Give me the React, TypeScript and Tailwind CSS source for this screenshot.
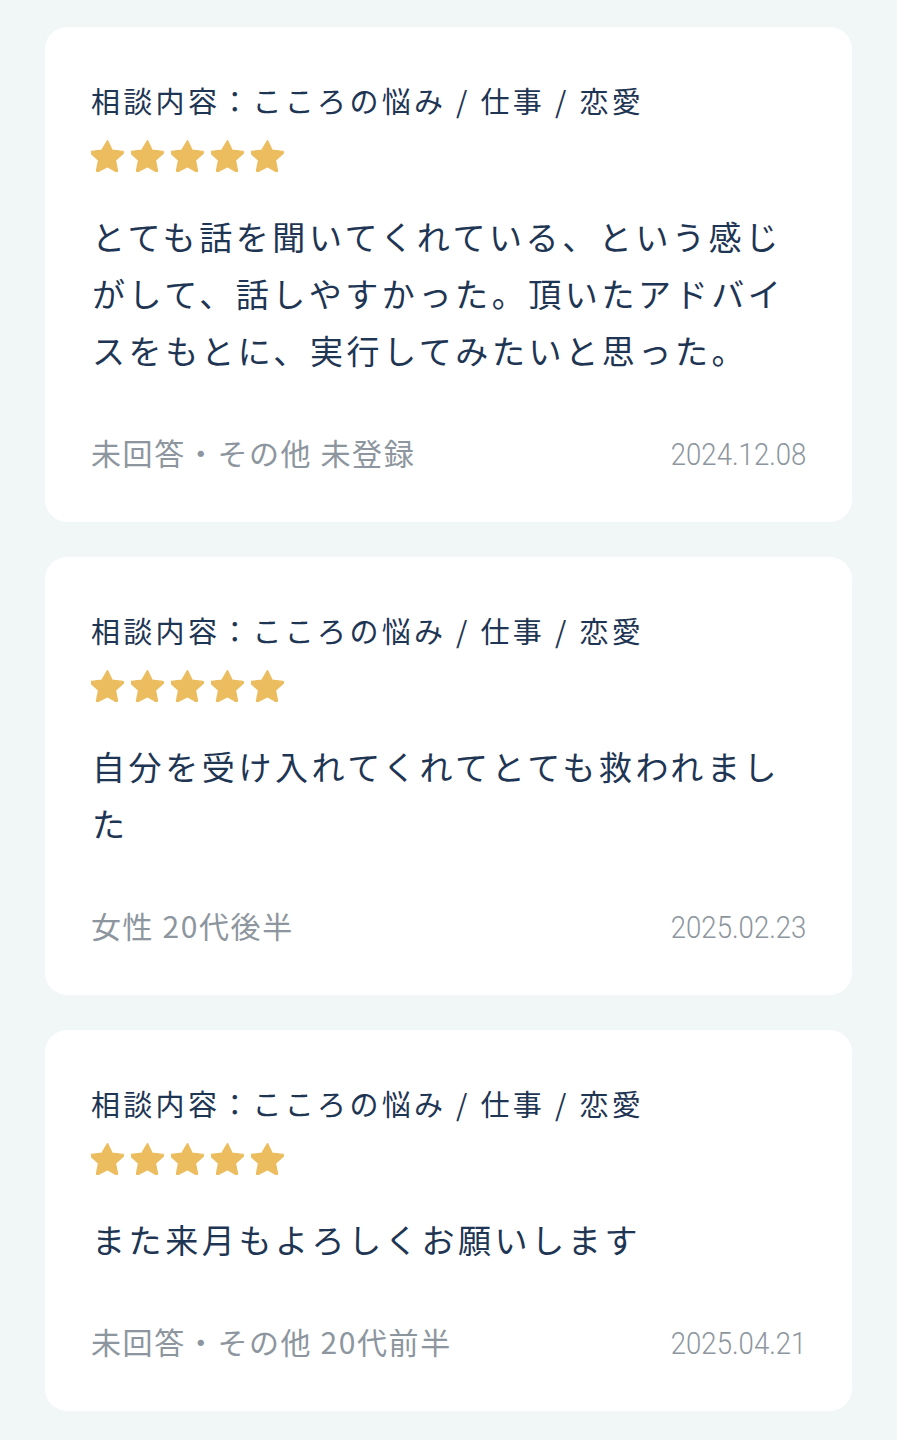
import React from 'react';

type Review = {
    body: string;
    profile: string;
    date: string;
};

const reviews: Review[] = [
    {
        body: 'とても話を聞いてくれている、という感じがして、話しやすかった。頂いたアドバイスをもとに、実行してみたいと思った。',
        profile: '未回答・その他 未登録',
        date: '2024.12.08',
    },
    {
        body: '自分を受け入れてくれてとても救われました',
        profile: '女性 20代後半',
        date: '2025.02.23',
    },
    {
        body: 'また来月もよろしくお願いします',
        profile: '未回答・その他 20代前半',
        date: '2025.04.21',
    },
];

function Star() {
    return (
        <svg width="33" height="32" viewBox="2.1 2.2 19.8 19.9" preserveAspectRatio="none" className="shrink-0">
            <path
                d="M12 2.6l2.75 5.9 6.35.8c.55.07.77.75.36 1.13l-4.68 4.4 1.2 6.3c.1.55-.47.96-.96.7L12 18.75l-5.62 3.08c-.49.26-1.06-.15-.96-.7l1.2-6.3-4.68-4.4c-.41-.38-.19-1.06.36-1.13l6.35-.8z"
                fill="#ebbd5f"
                stroke="#ebbd5f"
                strokeWidth="0.8"
                strokeLinejoin="round"
            />
        </svg>
    );
}

function ReviewCard({ review }: { review: Review }) {
    return (
        <div className="rounded-[22px] bg-white pl-[46px] pr-[46px] pt-[53px] pb-[50px]">
            <p className="text-[29px] leading-[40px] tracking-[3.3px] text-[#1e3553]">
                相談内容：こころの悩み / 仕事 / 恋愛
            </p>
            <div className="mt-[20px] flex gap-[7px]">
                {[0, 1, 2, 3, 4].map((i) => (
                    <Star key={i} />
                ))}
            </div>
            <p className="mt-[36px] pl-[1px] text-[33px] leading-[57px] tracking-[3.6px] text-[#1e3553]">
                {review.body}
            </p>
            <div className="mt-[53px] flex items-center justify-between text-[#8d969e]">
                <span className="text-[30px] leading-[40px] tracking-[1.6px]">{review.profile}</span>
                <span className="inline-block origin-right translate-y-[3px] scale-x-[0.89] font-['Roboto','Noto_Sans_CJK_JP',sans-serif] text-[31px] font-light leading-[40px]">
                    {review.date}
                </span>
            </div>
        </div>
    );
}

export default function App() {
    return (
        <div className="min-h-[1440px] bg-[#f1f6f6] px-[45px] pt-[27px] pb-[30px] font-['Noto_Sans_CJK_JP','Noto_Sans',sans-serif]">
            <div className="flex flex-col gap-[35px]">
                {reviews.map((r) => (
                    <ReviewCard key={r.date} review={r} />
                ))}
            </div>
        </div>
    );
}
